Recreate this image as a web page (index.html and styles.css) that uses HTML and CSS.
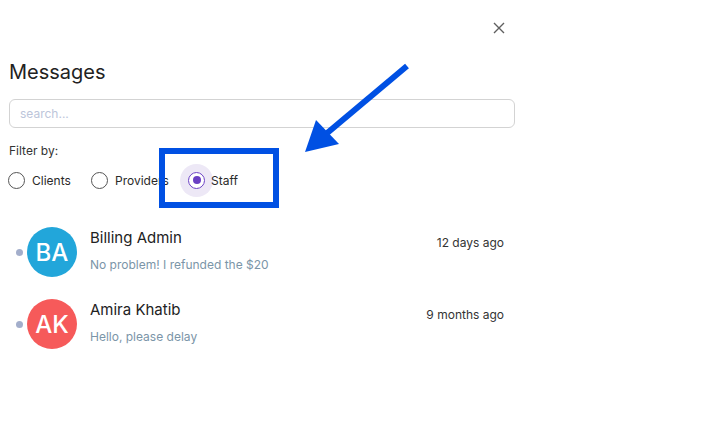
FILE: index.html
```html
<!DOCTYPE html>
<html lang="en">
<head>
<meta charset="utf-8">
<title>Messages</title>
<link rel="stylesheet" href="styles.css">
</head>
<body>
<div class="panel">
  <div class="top">
    <button class="close" aria-label="Close">
      <svg width="12" height="12" viewBox="0 0 12 12"><path d="M1 1 L11 11 M11 1 L1 11" stroke="#5f5f5f" stroke-width="1.4" fill="none"/></svg>
    </button>
  </div>
  <h1 class="title">Messages</h1>
  <div class="search"><input class="search-input" type="text" placeholder="search..."></div>
  <div class="filter-label">Filter by:</div>
  <div class="radios">
    <label class="radio r-clients"><span class="circle"></span><span class="rlabel">Clients</span></label>
    <label class="radio r-providers"><span class="circle"></span><span class="rlabel">Providers</span></label>
    <label class="radio r-staff"><span class="circle checked"><span class="inner"></span></span><span class="rlabel">Staff</span></label>
  </div>
  <ul class="threads">
    <li class="thread">
      <span class="dot"></span>
      <span class="avatar av-blue">BA</span>
      <div class="body">
        <div class="line1"><span class="name">Billing Admin</span><span class="time">12 days ago</span></div>
        <div class="preview">No problem! I refunded the $20</div>
      </div>
    </li>
    <li class="thread">
      <span class="dot"></span>
      <span class="avatar av-red">AK</span>
      <div class="body">
        <div class="line1"><span class="name">Amira Khatib</span><span class="time">9 months ago</span></div>
        <div class="preview">Hello, please delay</div>
      </div>
    </li>
  </ul>
</div>
<div class="annot-box"></div>
<svg class="annot-arrow" width="704" height="422" viewBox="0 0 704 422">
  <line x1="407" y1="66" x2="326" y2="134" stroke="#0050e3" stroke-width="6"/>
  <polygon points="305,152 316,120 339,144" fill="#0050e3"/>
</svg>
</body>
</html>
```

FILE: styles.css
```css
* { box-sizing: border-box; }
html, body { margin: 0; padding: 0; background: #fff; }
body {
  font-family: Inter, "Noto Sans", "Liberation Sans", sans-serif;
  color: #222;
  position: relative;
  width: 704px;
  height: 422px;
  overflow: hidden;
}
.panel {
  width: 524px;
  padding: 0 9px;
}
.top {
  height: 56px;
  display: flex;
  justify-content: flex-end;
  align-items: center;
  padding-right: 10px;
}
.close {
  border: 0;
  background: none;
  padding: 0;
  width: 12px;
  height: 12px;
  display: flex;
}
.title {
  margin: 4px 0 0;
  font-size: 20px;
  line-height: 24px;
  font-weight: 400;
  color: #222;
}
.search { margin-top: 15px; }
.search-input {
  width: 506px;
  height: 29px;
  border: 1px solid #d3d3d3;
  border-radius: 6px;
  padding: 0 10px;
  font-family: inherit;
  font-size: 12px;
  color: #333;
  outline: none;
}
.search-input::placeholder { color: #bcc5da; }
.filter-label {
  margin-top: 15px;
  font-size: 12px;
  line-height: 16px;
  color: #333;
}
.radios {
  margin-top: 5px;
  height: 32px;
  display: flex;
  align-items: center;
  margin-left: -1px;
}
.radio {
  display: flex;
  align-items: center;
  font-size: 12px;
  color: #2a2a2a;
}
.r-clients { width: 83px; }
.r-providers { width: 97px; }
.circle {
  width: 17px;
  height: 17px;
  border-radius: 50%;
  border: 1.5px solid #555;
  display: flex;
  align-items: center;
  justify-content: center;
  flex: none;
}
.circle.checked {
  border-color: #6a3fc4;
  box-shadow: 0 0 0 8px #ede8f6;
}
.inner {
  width: 8px;
  height: 8px;
  border-radius: 50%;
  background: #6a3fc4;
}
.rlabel { margin-left: 7px; }
.r-staff .rlabel { margin-left: 6px; }
.threads {
  list-style: none;
  margin: 31px 0 0;
  padding: 0;
  display: flex;
  flex-direction: column;
  gap: 22px;
}
.thread {
  display: flex;
  align-items: flex-start;
  height: 50px;
}
.dot {
  width: 7px;
  height: 7px;
  border-radius: 50%;
  background: #a3aecb;
  margin: 21.5px 4px 0 7px;
  flex: none;
}
.avatar {
  width: 50px;
  height: 50px;
  border-radius: 50%;
  color: #fff;
  font-size: 24px;
  font-weight: 500;
  display: flex;
  align-items: center;
  justify-content: center;
  flex: none;
}
.av-blue { background: #22a6da; }
.av-red { background: #f65a5a; }
.body {
  flex: 1;
  margin-left: 13px;
  margin-right: 11px;
  padding-top: 1px;
}
.line1 {
  display: flex;
  justify-content: space-between;
  align-items: flex-start;
}
.name {
  font-size: 15px;
  line-height: 20px;
  color: #222;
}
.time {
  font-size: 12px;
  line-height: 18px;
  margin-top: 6px;
  color: #333;
}
.preview {
  margin-top: 4px;
  font-size: 12px;
  line-height: 18px;
  color: #7b95a8;
}
.annot-box {
  position: absolute;
  left: 159px;
  top: 148px;
  width: 120px;
  height: 60px;
  border: 6px solid #0050e3;
}
.annot-arrow {
  position: absolute;
  left: 0;
  top: 0;
  pointer-events: none;
}
```
